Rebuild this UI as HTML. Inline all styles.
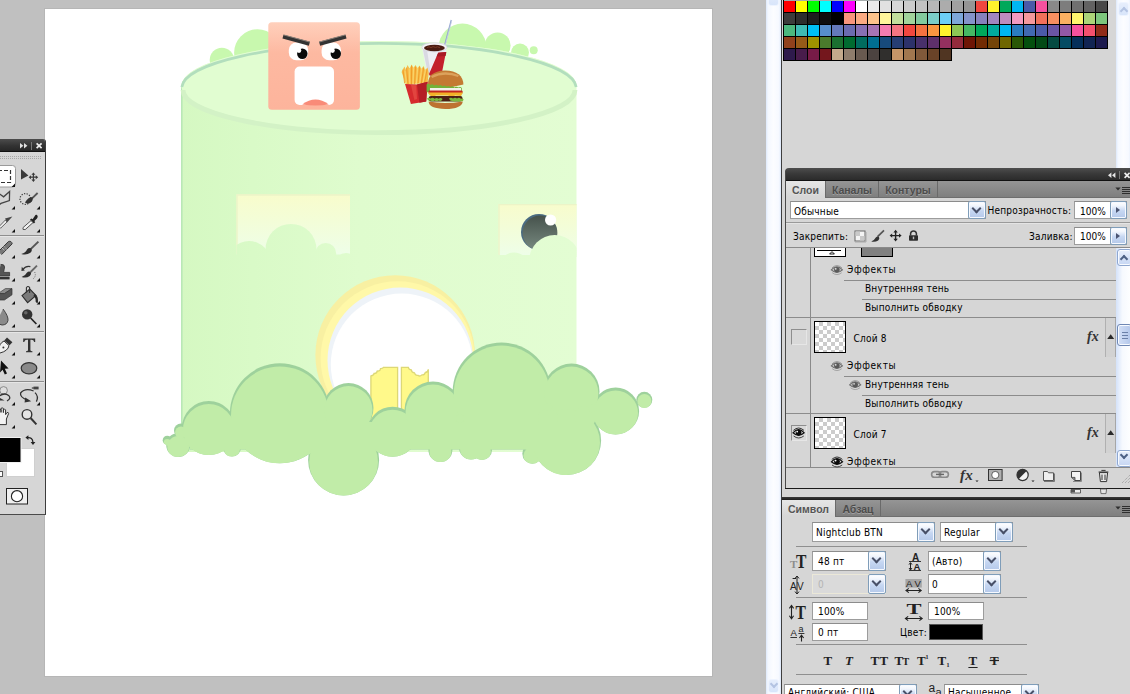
<!DOCTYPE html>
<html lang="ru">
<head>
<meta charset="utf-8">
<title>Photoshop</title>
<style>
*{box-sizing:border-box;margin:0;padding:0}
html,body{width:1130px;height:694px;overflow:hidden;background:#c0c0c0}
body{position:relative;font-family:"DejaVu Sans Condensed","Liberation Sans",sans-serif;font-size:10px;color:#000;line-height:12px;letter-spacing:.2px}
.abs{position:absolute}
.t{position:absolute;white-space:nowrap;line-height:12px;height:12px}
.hl{position:absolute;height:1px;background:#8c8c8c}
.vl{position:absolute;width:1px;background:#8c8c8c}
#canvas{position:absolute;left:45px;top:9px;width:667px;height:667px;background:#fff;box-shadow:0 0 0 1px #b6b6b6}
#art{position:absolute;left:0;top:0}
/* panels */
.pbg{position:absolute;background:#d6d6d6}
.titlebar{position:absolute;background:linear-gradient(#4e4e4e,#3a3a3a 45%,#2b2b2b);}
.tabrow{position:absolute;background:linear-gradient(#959595,#7f7f7f)}
.tab{position:absolute;top:0;height:100%;font-family:"Liberation Sans",sans-serif;font-weight:bold;font-size:10.500px;line-height:19px;color:#4c4c4c;letter-spacing:0;text-align:center;border-right:1px solid #6a6a6a;text-shadow:0 1px 0 rgba(255,255,255,.25)}
.tab.on{background:linear-gradient(#e6e6e6,#d6d6d6);border-right:1px solid #6a6a6a;color:#555}
.field{position:absolute;background:#fff;border:1px solid #9c9c9c;border-top-color:#8c8c8c}
.field .t{left:3px;top:3px}
.dd{position:absolute;right:-1px;top:-1px;bottom:-1px;width:18px;border:1px solid #7f9db9;border-radius:2px;background:linear-gradient(#fff 0,#f2f6fd 22%,#c6d7f2 55%,#b5c9ea);box-shadow:inset 0 0 0 1px #f6f9ff}
.dd:after{content:"";position:absolute;left:4px;top:3px;width:5px;height:5px;border-right:2.400px solid #485068;border-bottom:2.400px solid #485068;transform:rotate(45deg)}
.dd.r:after{left:5px;top:5px;width:0;height:0;border:3px solid transparent;border-left:4px solid #4a5472;border-right:0;transform:none}
.sbd{position:absolute;background:linear-gradient(90deg,#dce8fb 0,#f4f8ff 2px,#fcfdff 50%,#f6f9ff calc(100% - 2px),#dce8fb 100%)}
.sbtn.dis{border-color:#eef4ff;background:linear-gradient(#e6eefc,#d8e5fa);box-shadow:none}
.sb{position:absolute;background:linear-gradient(90deg,#d4e2fa,#f6f9fe 45%,#fdfeff)}
.sbtn{position:absolute;border:1px solid #8fa7cf;border-radius:3px;background:linear-gradient(#e8effc,#c6d6f3);box-shadow:inset 0 0 0 1px #f8fbff}
.chev{position:absolute;width:6px;height:6px;border-left:2px solid #4d6185;border-top:2px solid #4d6185}
.sw{position:absolute;width:11px;height:11px;display:block}
.eyebox{width:16px;height:16px;background:#d9d9d9;border:1px solid #8e8e8e;border-right-color:#e6e6e6;border-bottom-color:#e6e6e6}
.thumb{width:32px;height:32px;border:1px solid #000;background-color:#fff;background-image:linear-gradient(45deg,#ccc 25%,transparent 25%,transparent 75%,#ccc 75%),linear-gradient(45deg,#ccc 25%,transparent 25%,transparent 75%,#ccc 75%);background-size:8px 8px;background-position:0 0,4px 4px}
.lcol{width:11px;height:39px;background:#d2d2d2;border-left:1px solid #b0b0b0;border-right:1px solid #a6a6a6}
</style>
</head>
<body>
<div id="canvas"></div>
<svg id="art" width="1130" height="694" viewBox="0 0 1130 694">
<defs>
<clipPath id="cv"><rect x="45" y="9" width="667" height="667"/></clipPath>
<linearGradient id="gBody" gradientUnits="userSpaceOnUse" x1="181" y1="0" x2="577" y2="0">
<stop offset="0" stop-color="#d5f8c2"/><stop offset=".18" stop-color="#d9fac7"/><stop offset=".45" stop-color="#dffcce"/><stop offset="1" stop-color="#e3fdd3"/>
</linearGradient>
<linearGradient id="gWin" x1="0" y1="0" x2="0" y2="1">
<stop offset="0" stop-color="#f8fccc"/><stop offset=".45" stop-color="#f3fdd8"/><stop offset="1" stop-color="#eefee8"/>
</linearGradient>
<linearGradient id="gBall" x1="0" y1="0" x2="0" y2="1">
<stop offset="0" stop-color="#46524c"/><stop offset="1" stop-color="#788a80"/>
</linearGradient>
<linearGradient id="gFace" x1="0" y1="0" x2="0" y2="1">
<stop offset="0" stop-color="#ffd0bc"/><stop offset=".35" stop-color="#fdb9a1"/><stop offset="1" stop-color="#fdb49c"/>
</linearGradient>
<clipPath id="cw1"><rect x="236.5" y="194.5" width="113.5" height="62"/></clipPath>
<clipPath id="cw2"><rect x="498.5" y="204" width="78" height="53"/></clipPath>
<g id="bush">
<circle cx="167.2" cy="440.3" r="4.5"/><circle cx="178.2" cy="445" r="12"/><circle cx="181" cy="430.500" r="7"/><circle cx="208.8" cy="428" r="27"/><circle cx="232" cy="447.6" r="9"/>
<circle cx="279.9" cy="413.3" r="50"/><circle cx="348.5" cy="408" r="25"/><circle cx="343.6" cy="459.9" r="35.5"/><circle cx="392.6" cy="431.7" r="25"/>
<circle cx="433" cy="410" r="28.5"/><circle cx="440.4" cy="450" r="12"/><circle cx="501.7" cy="391.5" r="49"/><circle cx="482" cy="450" r="10"/>
<circle cx="471" cy="447.6" r="12"/><circle cx="532.3" cy="453.7" r="10"/><circle cx="571.5" cy="391.5" r="28"/><circle cx="566.6" cy="440.5" r="34.5"/>
<circle cx="615.6" cy="411" r="23.5"/><circle cx="585" cy="415" r="12"/><circle cx="548" cy="416" r="11"/><circle cx="460" cy="426" r="9"/><rect x="190" y="420" width="400" height="29.5"/>
</g>
<g id="bush2">
<circle cx="167.2" cy="440.3" r="3.4"/><circle cx="178.2" cy="445" r="10.9"/><circle cx="181" cy="430.500" r="5.9"/><circle cx="208.8" cy="428" r="25.9"/><circle cx="232" cy="447.6" r="7.9"/>
<circle cx="279.9" cy="413.3" r="48.9"/><circle cx="348.5" cy="408" r="23.9"/><circle cx="343.6" cy="459.9" r="34.4"/><circle cx="392.6" cy="431.7" r="23.9"/>
<circle cx="433" cy="410" r="27.4"/><circle cx="440.4" cy="450" r="10.9"/><circle cx="501.7" cy="391.5" r="47.9"/><circle cx="482" cy="450" r="8.9"/>
<circle cx="471" cy="447.6" r="10.9"/><circle cx="532.3" cy="453.7" r="8.9"/><circle cx="571.5" cy="391.5" r="26.9"/><circle cx="566.6" cy="440.5" r="33.4"/>
<circle cx="615.6" cy="411" r="22.4"/><circle cx="585" cy="415" r="10.9"/><circle cx="548" cy="416" r="9.9"/><circle cx="460" cy="426" r="7.9"/><rect x="190" y="420" width="400" height="27.500"/>
<circle cx="460" cy="416.500" r="4"/><circle cx="548.200" cy="405" r="4"/><circle cx="592.800" cy="406.300" r="4"/>
</g>
<clipPath id="cbush">
<circle cx="167.2" cy="440.3" r="4.5"/><circle cx="178.2" cy="445" r="12"/><circle cx="181" cy="430.500" r="7"/><circle cx="208.8" cy="428" r="27"/><circle cx="232" cy="447.6" r="9"/>
<circle cx="279.9" cy="413.3" r="50"/><circle cx="348.5" cy="408" r="25"/><circle cx="343.6" cy="459.9" r="35.5"/><circle cx="392.6" cy="431.7" r="25"/>
<circle cx="433" cy="410" r="28.5"/><circle cx="440.4" cy="450" r="12"/><circle cx="501.7" cy="391.5" r="49"/><circle cx="482" cy="450" r="10"/>
<circle cx="471" cy="447.6" r="12"/><circle cx="532.3" cy="453.7" r="10"/><circle cx="571.5" cy="391.5" r="28"/><circle cx="566.6" cy="440.5" r="34.5"/>
<circle cx="615.6" cy="411" r="23.5"/><circle cx="585" cy="415" r="12"/><circle cx="548" cy="416" r="11"/><circle cx="460" cy="426" r="9"/><rect x="190" y="420" width="400" height="29.5"/>
</clipPath>
</defs>
<g clip-path="url(#cv)">
<!-- back bushes -->
<g fill="#c8f8ae">
<circle cx="221.9" cy="60" r="12.2"/><circle cx="257.5" cy="52.7" r="23.4"/>
<circle cx="462.5" cy="47.6" r="24"/><circle cx="497.6" cy="45.5" r="13"/><circle cx="520" cy="52.5" r="9"/><circle cx="533.7" cy="50.3" r="4"/>
</g>
<!-- cylinder body -->
<path d="M181.5 86 A197.5 45 0 0 1 576.5 86 L576.5 452 L181.5 452 Z" fill="url(#gBody)"/>
<rect x="181" y="86" width="1.6" height="366" fill="#b9e8b6"/>
<!-- top ellipse -->
<ellipse cx="379" cy="86" rx="197.5" ry="45" fill="#e1fdd1"/>
<path d="M183 90 A195 42.400 0 0 0 575 90" fill="none" stroke="#d3f2c6" stroke-width="4.800"/>
<path d="M181.8 87 A197.3 45 0 0 1 576.2 87" fill="none" stroke="#b2debd" stroke-width="2.700"/>
<!-- window 1 -->
<rect x="236.5" y="194.5" width="113.5" height="60" fill="url(#gWin)"/>
<path d="M237 254 V195 H350" fill="none" stroke="#ecf4c8" stroke-width="1.4"/>
<g clip-path="url(#cw1)" fill="url(#gBody)">
<circle cx="249" cy="263" r="22"/><circle cx="291" cy="249.4" r="25.5"/><circle cx="325.7" cy="253.5" r="10.5"/><circle cx="346" cy="264" r="11"/>
</g>
<!-- window 2 -->
<rect x="498.5" y="204" width="78" height="51" fill="url(#gWin)"/>
<path d="M499 255 V204.6 H576.5" fill="none" stroke="#ecf4c8" stroke-width="1.4"/>
<circle cx="539" cy="232" r="18" fill="#4a6b82"/>
<circle cx="540" cy="233" r="17.4" fill="url(#gBall)"/>
<circle cx="550.6" cy="220" r="5.6" fill="#fff"/>
<g clip-path="url(#cw2)" fill="url(#gBody)">
<circle cx="554.700" cy="260.500" r="25.500"/><circle cx="514" cy="267.600" r="15.200"/>
</g>
<!-- arch -->
<circle cx="395.2" cy="355.1" r="79.8" fill="#f8f0a2"/>
<circle cx="397.6" cy="358.3" r="77" fill="#fff8a8"/>
<circle cx="400.3" cy="360.3" r="72.8" fill="#eef3f8"/>
<circle cx="401.7" cy="364.5" r="70.9" fill="#fff"/>
<!-- door leaves -->
<g fill="#fff98a" stroke="#ddd876" stroke-width="1.300">
<path d="M370.9 420 V376 q3 -.5 3.2 -2.6 q2.6 .2 3.2 -2.4 q3 .3 3.2 -2.3 q2.5 0 3 -1.4 H397.6 V420 Z"/>
<path d="M401.4 420 V367.3 H408.3 q.6 2.5 3 2.6 q.3 2.8 3.2 3 q.8 2.8 3.4 2.4 q2 1.6 4 -.4 q2.6 .4 3.4 -2.4 q2.6 -.3 3 -3.2 V420 Z"/>
</g>
<!-- front bushes -->
<use href="#bush" fill="#9ed19c"/>
<circle cx="644.3" cy="399.8" r="8" fill="#9ed19c"/>
<g clip-path="url(#cbush)"><use href="#bush2" fill="#c1eca8" transform="translate(0,2)"/></g>
<circle cx="644.4" cy="401" r="7" fill="#c1eca8"/>
<!-- face -->
<rect x="268.3" y="22.2" width="91.6" height="87.6" rx="3.5" fill="url(#gFace)"/>
<rect x="288.800" y="42.600" width="19.400" height="17.600" rx="7.500" fill="#fff"/>
<rect x="321.600" y="42.600" width="19.400" height="17.600" rx="7.500" fill="#fff"/>
<circle cx="302.300" cy="53.800" r="5.200" fill="#0a0a0a"/><circle cx="335.800" cy="53.800" r="5.200" fill="#0a0a0a"/>
<circle cx="299" cy="50.600" r="2.300" fill="#fff"/><circle cx="332.500" cy="50.600" r="2.300" fill="#fff"/>
<path d="M283 36.600 L309.400 43.800" stroke="#333" stroke-width="4" fill="none"/>
<path d="M346 36.600 L319.600 43.800" stroke="#333" stroke-width="4" fill="none"/>
<path d="M283.600 34.900 L310 42.100 M345.400 34.900 L319 42.100" stroke="#8a8078" stroke-width="1" fill="none"/>
<rect x="294.6" y="66.6" width="39.4" height="38.4" rx="5" fill="#fff"/>
<path d="M302.2 104.6 Q315.5 94.6 328.8 104.6 Q315.5 106.4 302.2 104.6Z" fill="#f98b78"/>
<!-- fast food -->
<g>
<path d="M451.4 20 L444.8 45" stroke="#93a4cf" stroke-width="1.5"/>
<path d="M451.9 20 L445.3 45" stroke="#e8ecf6" stroke-width=".5"/>
<path d="M422 47.4 L427.4 75 L441 77.6 L446.8 47.4 Z" fill="#eeeef3"/>
<path d="M423 50 L428.2 75 L431 75.6 L427 50Z" fill="#d9d9e2"/>
<path d="M446.8 48 L446 52 L438.2 52.7 L429 74 L429.6 75.6 L441 77.6 Z" fill="#c3202b"/>
<path d="M446.4 52 L438.2 52.7 L436.6 56.4 L445.6 56Z" fill="#a81a24"/>
<ellipse cx="434.4" cy="47.3" rx="12.6" ry="4.5" fill="#f6f6f8" stroke="#d4d4de" stroke-width=".8"/>
<ellipse cx="434.4" cy="48" rx="10.4" ry="3.2" fill="#4a1c12"/>
<path d="M427 47.6 q2 -1.6 4 0 q2 -1.8 4.4 -.2 q2.2 -1.4 4.6 .4" stroke="#7a3a26" stroke-width="1" fill="none"/>
<path d="M401.6 72 L404.4 66.4 L406 70 L407.4 65 L409.6 68.6 L411.6 64.6 L413.4 68 L415.6 65 L417.4 68.4 L419.6 65.4 L421.4 69 L423.6 66 L425 70 L427.6 67.4 L428.8 73 L427.6 82.6 L406 84.4Z" fill="#f6bc48"/>
<g stroke="#ef9a26" stroke-width=".9" fill="none" stroke-linecap="round">
<path d="M404.6 83 L403 70 M408 84 L406.6 68 M411.4 84 L411.6 66 M414.6 84 L415.6 67 M418 83.6 L419.6 67 M421.4 83 L423.6 68 M424.6 82.6 L427 70"/>
</g>
<g stroke="#fbd870" stroke-width=".9" fill="none" stroke-linecap="round">
<path d="M406.4 83 L405 71 M409.8 84 L409.2 69 M413 84 L413.6 68 M416.4 83.6 L417.6 68 M419.8 83 L421.6 69 M423 82.8 L425.4 70"/>
</g>
<path d="M405 84 L410.9 104 L426.2 101.6 L427.6 81.8 L417 84.6 Z" fill="#d62b2e"/>
<path d="M417 84.6 L419.4 102.8 L426.2 101.6 L427.6 81.8 Z" fill="#b41e25"/>
<path d="M411 85 L414.4 100 L417 99 L416.2 85.2Z" fill="#e2453f"/>
<path d="M428 85.6 Q427 71 445 70.4 Q463 71 463.4 84.6 Q445 90 428 85.6Z" fill="#c47a33"/>
<path d="M431.6 77 Q444 70.6 458.4 76" stroke="#dca25c" stroke-width="2.4" fill="none"/>
<path d="M426.6 84.4 q2 -1.4 3.6 .6 q2 -1.6 4 .4 q2 -1.6 4 .4 q2.2 -1.6 4.2 .4 q2 -1.6 4 .4 q2 -1.6 4 .4 q2 -1.6 4 .4 q2 -1.6 4 .2 q2 -1.4 3.4 .4 v3.6 q-1.6 1.8 -3.4 .2 q-2 1.6 -4 0 q-2 1.6 -4 0 q-2 1.6 -4 0 q-2 1.6 -4 0 q-2 1.6 -4.2 0 q-2 1.6 -4 0 q-2 1.6 -4 0 q-2 1.4 -3.6 -.4Z" fill="#74b23a"/>
<rect x="430" y="88" width="31" height="3.8" fill="#f3f0ea"/>
<rect x="428.6" y="90.4" width="34" height="3" rx="1" fill="#c3261f"/>
<path d="M427.6 92.6 H463 L461 96 L455 95.4 L452 97.6 L448 95.6 L436 95.6 L433 97 L430 95.4Z" fill="#f2b228"/>
<rect x="428.6" y="96" width="34" height="5.6" rx="2.4" fill="#4c2014"/>
<path d="M427 98.4 q2 -1.6 3.6 .2 q2 -1.6 4 .2 q2 -1.8 4 0 q2 -1.6 4 .2 q-1 2.6 -4 1.6 q-2 1.4 -4 0 q-2 1.4 -4 0 q-2.6 .6 -3.600 -2.200Z M449 98.400 q2 -1.6 4 .2 q2 -1.6 4 0 q2 -1.6 4 .2 q1.600 -1 2.600 .6 q-.6 2.600 -3 1.600 q-2 1.4 -4 0 q-2 1.4 -4 0 q-2.600 .4 -3.600 -2.600Z" fill="#7cb83e"/>
<path d="M428.600 101.600 Q429 108.800 445.400 109 Q461.800 108.800 462.800 101.400 Q445 104.600 428.600 101.600Z" fill="#bd7231"/>
</g>
</g>
</g>
</svg>
<!-- document scrollbar -->
<div class="sbd" style="left:766px;top:0;width:15px;height:694px"></div>
<div class="sbtn dis" style="left:768px;top:-9px;width:11px;height:15px"></div>
<div class="sbtn dis" style="left:768px;top:679px;width:11px;height:14px"></div>
<div class="chev" style="left:770.5px;top:681px;transform:rotate(225deg);width:6px;height:6px;border-color:#b4c4e2"></div>
<!-- dock background -->
<div class="pbg" style="left:781px;top:0;width:349px;height:694px;border-left:1px solid #3e3e3e"></div>
<!-- swatches scrollbar -->
<div class="sbd" style="left:1116px;top:0;width:15px;height:168px"></div>
<div class="sbtn dis" style="left:1118px;top:2px;width:11px;height:14px"></div>
<div class="chev" style="left:1120.500px;top:7.500px;transform:rotate(45deg);border-color:#b4c4e2"></div>
<!-- swatches -->
<div class="abs" style="left:783px;top:0;width:325px;height:49px;background:#000"></div>
<div class="abs" style="left:783px;top:48px;width:169px;height:13px;background:#000"></div>
<div class="abs" style="left:784px;top:0;width:324px;height:1px;background:#a4acac"></div>
<i class="sw" style="left:784px;top:1px;background:#ff0000"></i>
<i class="sw" style="left:796px;top:1px;background:#ffff00"></i>
<i class="sw" style="left:808px;top:1px;background:#00ff00"></i>
<i class="sw" style="left:820px;top:1px;background:#00ffff"></i>
<i class="sw" style="left:832px;top:1px;background:#0000ff"></i>
<i class="sw" style="left:844px;top:1px;background:#ff00ff"></i>
<i class="sw" style="left:856px;top:1px;background:#ffffff"></i>
<i class="sw" style="left:868px;top:1px;background:#ebebeb"></i>
<i class="sw" style="left:880px;top:1px;background:#e1e1e1"></i>
<i class="sw" style="left:892px;top:1px;background:#d7d7d7"></i>
<i class="sw" style="left:904px;top:1px;background:#cccccc"></i>
<i class="sw" style="left:916px;top:1px;background:#c2c2c2"></i>
<i class="sw" style="left:928px;top:1px;background:#b7b7b7"></i>
<i class="sw" style="left:940px;top:1px;background:#acacac"></i>
<i class="sw" style="left:952px;top:1px;background:#a1a1a1"></i>
<i class="sw" style="left:964px;top:1px;background:#959595"></i>
<i class="sw" style="left:976px;top:1px;background:#f0463f"></i>
<i class="sw" style="left:988px;top:1px;background:#fff22d"></i>
<i class="sw" style="left:1000px;top:1px;background:#00a85a"></i>
<i class="sw" style="left:1012px;top:1px;background:#00b6f1"></i>
<i class="sw" style="left:1024px;top:1px;background:#4a5aa8"></i>
<i class="sw" style="left:1036px;top:1px;background:#f6519e"></i>
<i class="sw" style="left:1048px;top:1px;background:#898989"></i>
<i class="sw" style="left:1060px;top:1px;background:#7d7d7d"></i>
<i class="sw" style="left:1072px;top:1px;background:#707070"></i>
<i class="sw" style="left:1084px;top:1px;background:#626262"></i>
<i class="sw" style="left:1096px;top:1px;background:#484848"></i>
<i class="sw" style="left:784px;top:13px;background:#3c3c3c"></i>
<i class="sw" style="left:796px;top:13px;background:#2d2d2d"></i>
<i class="sw" style="left:808px;top:13px;background:#1e1e1e"></i>
<i class="sw" style="left:820px;top:13px;background:#0e0e0e"></i>
<i class="sw" style="left:832px;top:13px;background:#000000"></i>
<i class="sw" style="left:844px;top:13px;background:#f9957c"></i>
<i class="sw" style="left:856px;top:13px;background:#fbab82"></i>
<i class="sw" style="left:868px;top:13px;background:#fdc48c"></i>
<i class="sw" style="left:880px;top:13px;background:#fff59b"></i>
<i class="sw" style="left:892px;top:13px;background:#c3df9c"></i>
<i class="sw" style="left:904px;top:13px;background:#a2d49c"></i>
<i class="sw" style="left:916px;top:13px;background:#83ca9e"></i>
<i class="sw" style="left:928px;top:13px;background:#7bcdc8"></i>
<i class="sw" style="left:940px;top:13px;background:#6dcff6"></i>
<i class="sw" style="left:952px;top:13px;background:#7da7d9"></i>
<i class="sw" style="left:964px;top:13px;background:#8493ca"></i>
<i class="sw" style="left:976px;top:13px;background:#8781bd"></i>
<i class="sw" style="left:988px;top:13px;background:#a186be"></i>
<i class="sw" style="left:1000px;top:13px;background:#bd8cbf"></i>
<i class="sw" style="left:1012px;top:13px;background:#f49ac1"></i>
<i class="sw" style="left:1024px;top:13px;background:#f5989d"></i>
<i class="sw" style="left:1036px;top:13px;background:#f3705a"></i>
<i class="sw" style="left:1048px;top:13px;background:#f78f60"></i>
<i class="sw" style="left:1060px;top:13px;background:#fbb061"></i>
<i class="sw" style="left:1072px;top:13px;background:#fff56d"></i>
<i class="sw" style="left:1084px;top:13px;background:#acd578"></i>
<i class="sw" style="left:1096px;top:13px;background:#7cc67c"></i>
<i class="sw" style="left:784px;top:25px;background:#4cb87e"></i>
<i class="sw" style="left:796px;top:25px;background:#3fbbb4"></i>
<i class="sw" style="left:808px;top:25px;background:#00bff3"></i>
<i class="sw" style="left:820px;top:25px;background:#578ecb"></i>
<i class="sw" style="left:832px;top:25px;background:#6479bb"></i>
<i class="sw" style="left:844px;top:25px;background:#6b6bb0"></i>
<i class="sw" style="left:856px;top:25px;background:#8870b4"></i>
<i class="sw" style="left:868px;top:25px;background:#a674b4"></i>
<i class="sw" style="left:880px;top:25px;background:#f57cb0"></i>
<i class="sw" style="left:892px;top:25px;background:#f47582"></i>
<i class="sw" style="left:904px;top:25px;background:#f2473f"></i>
<i class="sw" style="left:916px;top:25px;background:#f57140"></i>
<i class="sw" style="left:928px;top:25px;background:#fa9640"></i>
<i class="sw" style="left:940px;top:25px;background:#fff22d"></i>
<i class="sw" style="left:952px;top:25px;background:#8dc655"></i>
<i class="sw" style="left:964px;top:25px;background:#45b863"></i>
<i class="sw" style="left:976px;top:25px;background:#00a85a"></i>
<i class="sw" style="left:988px;top:25px;background:#00ab9c"></i>
<i class="sw" style="left:1000px;top:25px;background:#00b6f1"></i>
<i class="sw" style="left:1012px;top:25px;background:#2a7cc1"></i>
<i class="sw" style="left:1024px;top:25px;background:#4169b2"></i>
<i class="sw" style="left:1036px;top:25px;background:#4a5aa8"></i>
<i class="sw" style="left:1048px;top:25px;background:#6a55a5"></i>
<i class="sw" style="left:1060px;top:25px;background:#9258a6"></i>
<i class="sw" style="left:1072px;top:25px;background:#f6519e"></i>
<i class="sw" style="left:1084px;top:25px;background:#f4506e"></i>
<i class="sw" style="left:1096px;top:25px;background:#902c1a"></i>
<i class="sw" style="left:784px;top:37px;background:#90411c"></i>
<i class="sw" style="left:796px;top:37px;background:#965a18"></i>
<i class="sw" style="left:808px;top:37px;background:#9e9200"></i>
<i class="sw" style="left:820px;top:37px;background:#4a7a2c"></i>
<i class="sw" style="left:832px;top:37px;background:#1b7030"></i>
<i class="sw" style="left:844px;top:37px;background:#006b30"></i>
<i class="sw" style="left:856px;top:37px;background:#006c5f"></i>
<i class="sw" style="left:868px;top:37px;background:#006e91"></i>
<i class="sw" style="left:880px;top:37px;background:#174a7c"></i>
<i class="sw" style="left:892px;top:37px;background:#263d73"></i>
<i class="sw" style="left:904px;top:37px;background:#2c316a"></i>
<i class="sw" style="left:916px;top:37px;background:#48306b"></i>
<i class="sw" style="left:928px;top:37px;background:#5e306b"></i>
<i class="sw" style="left:940px;top:37px;background:#94305f"></i>
<i class="sw" style="left:952px;top:37px;background:#932a3c"></i>
<i class="sw" style="left:964px;top:37px;background:#6e1505"></i>
<i class="sw" style="left:976px;top:37px;background:#722b03"></i>
<i class="sw" style="left:988px;top:37px;background:#744408"></i>
<i class="sw" style="left:1000px;top:37px;background:#6f6600"></i>
<i class="sw" style="left:1012px;top:37px;background:#2a5705"></i>
<i class="sw" style="left:1024px;top:37px;background:#044f0e"></i>
<i class="sw" style="left:1036px;top:37px;background:#034a16"></i>
<i class="sw" style="left:1048px;top:37px;background:#054b42"></i>
<i class="sw" style="left:1060px;top:37px;background:#044c63"></i>
<i class="sw" style="left:1072px;top:37px;background:#052f59"></i>
<i class="sw" style="left:1084px;top:37px;background:#112452"></i>
<i class="sw" style="left:1096px;top:37px;background:#1c1a4e"></i>
<i class="sw" style="left:784px;top:49px;background:#2e1a4c"></i>
<i class="sw" style="left:796px;top:49px;background:#481c4b"></i>
<i class="sw" style="left:808px;top:49px;background:#771b47"></i>
<i class="sw" style="left:820px;top:49px;background:#74171d"></i>
<i class="sw" style="left:832px;top:49px;background:#c4aa8c"></i>
<i class="sw" style="left:844px;top:49px;background:#8f7d6c"></i>
<i class="sw" style="left:856px;top:49px;background:#695a50"></i>
<i class="sw" style="left:868px;top:49px;background:#4c4340"></i>
<i class="sw" style="left:880px;top:49px;background:#302f2d"></i>
<i class="sw" style="left:892px;top:49px;background:#c59568"></i>
<i class="sw" style="left:904px;top:49px;background:#a1774f"></i>
<i class="sw" style="left:916px;top:49px;background:#80593a"></i>
<i class="sw" style="left:928px;top:49px;background:#694328"></i>
<i class="sw" style="left:940px;top:49px;background:#503522"></i>
<!-- layers panel -->
<div class="titlebar" style="left:785px;top:168px;width:345px;height:13px;border-top-left-radius:4px;border-bottom:1px solid #111"></div>
<div class="vl" style="left:785px;top:172px;height:317px;background:#4a4a4a"></div>
<div class="tabrow" style="left:786px;top:181px;width:344px;height:17px;border-bottom:1px solid #6e6e6e">
 <div class="tab on" style="left:0;width:40px">Слои</div>
 <div class="tab" style="left:40px;width:53px">Каналы</div>
 <div class="tab" style="left:93px;width:59px">Контуры</div>
</div>
<div class="abs" style="left:786px;top:197px;width:39px;height:2px;background:#d6d6d6"></div>
<!-- blend row -->
<div class="field" style="left:790px;top:201px;width:196px;height:18px"><span class="t" style="top:4px">Обычные</span><span class="dd"></span></div>
<span class="t" style="left:987.5px;top:205px">Непрозрачность:</span>
<div class="field" style="left:1074px;top:201px;width:53px;height:18px"><span class="t" style="left:5px;top:4px;letter-spacing:0">100%</span><span class="dd r" style="width:17px"></span></div>
<div class="hl" style="left:786px;top:222px;width:344px;background:#9a9a9a"></div>
<div class="hl" style="left:786px;top:223px;width:344px;background:#e4e4e4"></div>
<!-- lock row -->
<span class="t" style="left:793px;top:231px">Закрепить:</span>
<span class="t" style="left:1029px;top:231px">Заливка:</span>
<div class="field" style="left:1074px;top:227px;width:53px;height:18px"><span class="t" style="left:5px;top:3px;letter-spacing:0">100%</span><span class="dd r" style="width:17px"></span></div>
<div class="hl" style="left:786px;top:247px;width:344px;background:#8a8a8a"></div>
<!-- list -->
<div class="vl" style="left:810px;top:248px;height:219px;background:#8a8a8a"></div>
<div class="abs" style="left:814px;top:244px;width:32px;height:13px;background:#fff;border:1px solid #000;clip-path:inset(4px 0 0 0)"></div>
<div class="abs" style="left:817px;top:250px;width:24px;height:1px;background:#000"></div>
<div class="abs" style="left:861px;top:244px;width:32px;height:13px;background:#808080;border:1px solid #000;clip-path:inset(4px 0 0 0)"></div>
<span class="t" style="left:847px;top:264px;letter-spacing:.6px">Эффекты</span>
<div class="hl" style="left:844px;top:280px;width:272px"></div>
<span class="t" style="left:865px;top:283px">Внутренняя тень</span>
<div class="hl" style="left:862px;top:299px;width:254px"></div>
<span class="t" style="left:865px;top:302px">Выполнить обводку</span>
<div class="hl" style="left:786px;top:317px;width:330px"></div>
<!-- layer 8 -->
<div class="abs eyebox" style="left:791px;top:329px"></div>
<div class="abs thumb" style="left:814px;top:321px"></div>
<span class="t" style="left:853.5px;top:333px">Слой 8</span>
<div class="abs lcol" style="left:1105px;top:318px"></div>
<span class="t" style="left:847px;top:360px;letter-spacing:.6px">Эффекты</span>
<div class="hl" style="left:844px;top:376px;width:272px"></div>
<span class="t" style="left:865px;top:379px">Внутренняя тень</span>
<div class="hl" style="left:862px;top:395px;width:254px"></div>
<span class="t" style="left:865px;top:398px">Выполнить обводку</span>
<div class="hl" style="left:786px;top:413px;width:330px"></div>
<!-- layer 7 -->
<div class="abs eyebox" style="left:791px;top:424.500px"></div>
<div class="abs thumb" style="left:814px;top:417px"></div>
<span class="t" style="left:853.5px;top:429px">Слой 7</span>
<div class="abs lcol" style="left:1105px;top:414px"></div>
<span class="t" style="left:847px;top:456px;height:11px;overflow:hidden;letter-spacing:.6px">Эффекты</span>
<div class="hl" style="left:786px;top:467px;width:344px;background:#8a8a8a"></div>
<div class="pbg" style="left:786px;top:468px;width:344px;height:20px"></div>
<div class="hl" style="left:785px;top:488px;width:345px;background:#1a1a1a"></div>
<!-- list scrollbar -->
<div class="sb" style="left:1116px;top:248px;width:14px;height:219px"></div>
<div class="sbtn" style="left:1117px;top:249px;width:15px;height:17px"></div>
<div class="chev" style="left:1121px;top:256px;transform:rotate(45deg)"></div>
<div class="sbtn" style="left:1117px;top:450px;width:15px;height:17px"></div>
<div class="chev" style="left:1121px;top:452px;transform:rotate(225deg)"></div>
<div class="sbtn" style="left:1117px;top:324px;width:15px;height:22px;border-color:#6f88b4;background:linear-gradient(90deg,#d4e0f6,#b2c6ea)"></div>
<div class="abs" style="left:1122px;top:332px;width:6px;height:7px;background:repeating-linear-gradient(#6a80a8 0 1px,transparent 1px 3px)"></div>
<svg class="abs" style="left:780px;top:160px" width="350" height="340" viewBox="780 160 350 340">
<defs>
<g id="eye">
<path d="M0 4 Q6 -2.600 12 4 Q6 9.400 0 4Z" fill="#c4c4c4" stroke="#6e6e6e" stroke-width="1.100"/>
<path d="M.8 1.800 Q6 -3 11.400 1.800" fill="none" stroke="#8a8a8a" stroke-width=".9"/>
<circle cx="6" cy="3.800" r="3" fill="#5a5a5a"/><circle cx="4.800" cy="2.800" r=".9" fill="#e6e6e6"/>
<path d="M1 7 Q6 11 11.200 7" fill="none" stroke="#9a9a9a" stroke-width=".9"/>
</g>
<g id="eyeD">
<path d="M.4 4 Q6 -2.400 11.600 4 Q6 9 .4 4Z" fill="#e2e2e2" stroke="#111" stroke-width="1.200"/>
<path d="M.8 1.600 Q6 -3.200 11.400 1.600" fill="none" stroke="#333" stroke-width="1"/>
<circle cx="6" cy="3.800" r="2.900" fill="#0a0a0a"/><circle cx="4.600" cy="2.800" r=".9" fill="#fff"/>
<path d="M1 7.200 Q6 11.200 11.200 7.200" fill="none" stroke="#444" stroke-width="1"/>
</g>
</defs>
<!-- title icons -->
<path d="M1111.4 172.6 L1108 175.3 L1111.4 178Z M1115.4 172.6 L1112 175.3 L1115.4 178Z" fill="#e6e6e6"/>
<rect x="1119" y="171" width="1" height="8" fill="#777"/>
<path d="M1124.6 172.8 L1129.6 177.8 M1129.6 172.8 L1124.6 177.8" stroke="#eee" stroke-width="1.7"/>
<!-- panel menu -->
<path d="M1115.4 187.6 H1120.6 L1118 190.4Z" fill="#2e2e2e"/>
<path d="M1122 187.5 H1130 M1122 189.5 H1130 M1122 191.5 H1130 M1122 193.5 H1130" stroke="#2e2e2e" stroke-width="1"/>
<!-- lock icons -->
<rect x="855" y="231" width="10" height="10" fill="#f4f4f4" stroke="#666" stroke-width="1"/>
<path d="M855.5 231.5 h4.5 v4.5 h-4.5z M860 236 h4.5 v4.5 h-4.5z" fill="#c9c9c9"/>
<path d="M855 242 H866 V232" fill="none" stroke="#aaa" stroke-width="1"/>
<path d="M884 230.4 L877.6 236.6" stroke="#555" stroke-width="1.7"/>
<path d="M871.2 241.4 Q874.8 240 875.8 237.6 Q877.4 236 879 237 Q880 239 878.2 240.4 Q875 242.4 871.2 241.4Z" fill="#333"/>
<path d="M895.6 229.8 L897.8 232.6 H896.3 V234.9 H899 V233.4 L901.6 235.6 L899 237.8 V236.3 H896.3 V238.8 H897.8 L895.6 241.4 L893.4 238.8 H894.9 V236.3 H892.2 V237.8 L889.6 235.6 L892.2 233.4 V234.9 H894.9 V232.6 H893.4Z" fill="#222"/>
<path d="M910.6 235.6 V233.4 Q911 231 913.5 231 Q916 231 916.4 233.4 V235.6" fill="none" stroke="#333" stroke-width="1.5"/>
<rect x="909" y="235.2" width="9" height="5.6" rx=".8" fill="#2c2c2c"/><rect x="912.8" y="236.6" width="1.4" height="2.6" fill="#bbb"/>
<!-- thumb triangle -->
<path d="M829.6 254 L832 251.6 L834.4 254Z" fill="none" stroke="#000" stroke-width=".9"/>
<!-- eyes -->
<use href="#eye" transform="translate(831.300,266.200) scale(.93)"/>
<use href="#eye" transform="translate(831.300,362.200) scale(.93)"/>
<use href="#eye" transform="translate(849.600,381.200) scale(.93)"/>
<use href="#eyeD" x="792.600" y="428.800"/>
<use href="#eyeD" x="831" y="457.800"/>
<!-- fx + triangles -->
<g font-family="'Liberation Serif',serif" font-style="italic" font-weight="bold" font-size="14" fill="#333">
<text x="1087" y="340.600">fx</text><text x="1087" y="436.600">fx</text>
<text x="960" y="480" font-size="15">fx</text>
</g>
<path d="M1107.200 339 L1110.700 334.300 L1114.200 339Z M1107.200 435 L1110.700 430.300 L1114.200 435Z" fill="#2a2a2a"/>
<path d="M975.4 480.4 H978.6 L977 482Z M1031.4 480.4 H1034.6 L1033 482Z" fill="#222"/>
<!-- bottom bar icons -->
<g fill="none" stroke="#8a8a8a" stroke-width="1.6">
<rect x="931.6" y="471.6" width="9" height="5.6" rx="2.8"/><rect x="939.4" y="471.6" width="9" height="5.6" rx="2.8"/>
</g>
<path d="M936 474.4 H944" stroke="#666" stroke-width="1.4"/>
<rect x="988.5" y="469.5" width="13.6" height="11" fill="#b0b0b0" stroke="#333" stroke-width="1"/>
<circle cx="995.3" cy="475" r="3.6" fill="#fff" stroke="#444" stroke-width=".8"/>
<circle cx="1022.6" cy="475" r="5.6" fill="#f4f4f4" stroke="#333" stroke-width="1.2"/>
<path d="M1018.6 479 A5.6 5.6 0 0 1 1026.6 471 Z" fill="#333"/>
<path d="M1043.5 480.5 V471.5 H1047.5 L1048.5 472.8 H1053.5 V480.5Z" fill="#eee" stroke="#555" stroke-width="1"/>
<path d="M1044 481.5 H1054.5 V473.5" fill="none" stroke="#777" stroke-width="1"/>
<path d="M1071.5 471.5 H1080.5 V480.5 H1075 L1071.5 477.4Z" fill="#f4f4f4" stroke="#444" stroke-width="1"/>
<path d="M1071.5 477.4 H1075 V480.5" fill="#888" stroke="#444" stroke-width=".8"/>
<path d="M1081.5 472.6 V481.5 H1073" fill="none" stroke="#888" stroke-width="1"/>
<path d="M1099.4 472.6 H1107.6 L1106.6 481.6 H1100.4Z" fill="#e8e8e8" stroke="#333" stroke-width="1"/>
<path d="M1098.6 472 H1108.4 M1101.4 470.4 H1105.6 M1102 474.6 V480 M1105 474.6 V480" stroke="#333" stroke-width="1"/>
<path d="M1122 483 L1130 475 M1125 483 L1130 478 M1128 483 L1130 481" stroke="#9a9a9a" stroke-width="1" stroke-dasharray="1 1"/>
<!-- glitch remnants -->
<path d="M1071 489.5 H1080.5 V493 H1071Z" fill="#eee" stroke="#444" stroke-width=".8"/><path d="M1071 489.5 h4 v3 h-4z" fill="#555"/>
<path d="M1100.4 489 H1106.6 L1106 493.6 H1101Z" fill="#e4e4e4" stroke="#555" stroke-width=".8"/>
</svg>
<!-- character panel -->
<div class="abs" style="left:782px;top:497px;width:348px;height:3px;background:linear-gradient(#3a3a3a,#1e1e1e)"></div>
<div class="tabrow" style="left:782px;top:500px;width:348px;height:17px;border-bottom:1px solid #6e6e6e">
 <div class="tab on" style="left:0;width:54px">Символ</div>
 <div class="tab" style="left:54px;width:45px">Абзац</div>
</div>
<div class="abs" style="left:782px;top:516px;width:53px;height:2px;background:#d6d6d6"></div>
<div class="field" style="left:812px;top:522px;width:123px;height:20px"><span class="t" style="top:4px">Nightclub BTN</span><span class="dd"></span></div>
<div class="field" style="left:940px;top:522px;width:73px;height:20px"><span class="t" style="top:4px">Regular</span><span class="dd"></span></div>
<div class="hl" style="left:796px;top:546px;width:231px;background:#8f8f8f"></div>
<div class="field" style="left:812px;top:551px;width:74px;height:20px"><span class="t" style="left:5px;top:4px">48 пт</span><span class="dd"></span></div>
<div class="field" style="left:928px;top:551px;width:73px;height:20px"><span class="t" style="top:4px">(Авто)</span><span class="dd"></span></div>
<div class="field" style="left:812px;top:574px;width:74px;height:20px;background:#dadada;border-color:#ebe8d8"><span class="t" style="left:5px;top:4px;color:#b4b4b4">0</span><span class="dd"></span></div>
<div class="field" style="left:928px;top:574px;width:73px;height:20px"><span class="t" style="top:4px">0</span><span class="dd"></span></div>
<div class="hl" style="left:796px;top:597px;width:231px;background:#8f8f8f"></div>
<div class="field" style="left:812px;top:602px;width:56px;height:18px"><span class="t" style="left:5px">100%</span></div>
<div class="field" style="left:928px;top:602px;width:56px;height:18px"><span class="t" style="left:5px">100%</span></div>
<div class="field" style="left:812px;top:623px;width:56px;height:18px"><span class="t" style="left:5px">0 пт</span></div>
<span class="t" style="left:900px;top:627px">Цвет:</span>
<div class="abs" style="left:929px;top:624px;width:54px;height:16px;background:#000;border:1px solid #555"></div>
<div class="hl" style="left:796px;top:644px;width:231px;background:#8f8f8f"></div>
<div class="hl" style="left:796px;top:674px;width:231px;background:#8f8f8f"></div>
<div class="field" style="left:784px;top:684px;width:133px;height:19px"><span class="t" style="left:3px;top:2px">Английский: США</span><span class="dd"></span></div>
<div class="field" style="left:944px;top:684px;width:95px;height:19px"><span class="t" style="left:3px;top:2px">Насыщенное</span><span class="dd"></span></div>
<svg class="abs" style="left:780px;top:500px" width="350" height="194" viewBox="780 500 350 194">
<path d="M1115.4 506.6 H1120.6 L1118 509.4Z" fill="#2e2e2e"/>
<path d="M1122 506.5 H1130 M1122 508.5 H1130 M1122 510.5 H1130 M1122 512.5 H1130" stroke="#2e2e2e" stroke-width="1"/>
<g font-family="'Liberation Serif',serif" fill="#222">
<text x="790" y="568.400" font-size="11" font-weight="bold" fill="#8c8c8c">T</text><text font-size="19.500" font-weight="bold" transform="translate(796,568.400) scale(.8,1)">T</text>
<text font-size="19.500" font-weight="bold" transform="translate(795.400,618.600) scale(.8,1)">T</text>
<text font-size="15" font-weight="bold" transform="translate(906.600,614.400) scale(1.5,1)">T</text>
<g font-weight="bold" font-size="13" fill="#222">
<text x="823.6" y="665">T</text><text x="845" y="665" font-style="italic">T</text>
<text x="870.6" y="665">TT</text><text x="894.6" y="665">T</text><text x="902.600" y="665" font-size="10">T</text>
<text x="917" y="665">T</text><text x="925.6" y="659" font-size="6">1</text>
<text x="937.6" y="665">T</text><text x="946.4" y="667" font-size="6">1</text>
<text x="968.6" y="665">T</text><text x="990" y="665">T</text>
</g>
</g>
<path d="M968.400 667.500 H977.600" stroke="#222"/><path d="M989.600 660.500 H999" stroke="#222" stroke-width="1.200"/>
<!-- vertical scale arrow -->
<path d="M791.5 606 V618 M789.4 608.4 L791.5 605.4 L793.6 608.4 M789.4 615.8 L791.5 618.8 L793.6 615.8" fill="none" stroke="#222" stroke-width="1.1"/>
<!-- horiz scale arrow -->
<path d="M906 618.5 H921.6 M908.2 616.4 L905.4 618.5 L908.2 620.6 M919.4 616.4 L922.2 618.5 L919.4 620.6" fill="none" stroke="#222" stroke-width="1.1"/>
<g font-family="'Liberation Sans',sans-serif" fill="#222">
<!-- kerning -->
<text x="790" y="590" font-size="10">A</text><text x="797" y="590" font-size="10">V</text>
<path d="M797 576 V594 M795 578.4 L797 576 L799 578.4 M795 591.6 L797 594 L799 591.6 M792.6 578.5 H796" fill="none" stroke="#222" stroke-width="1"/>
<!-- leading -->
<text x="912" y="560.600" font-size="10" font-weight="bold">A</text><text x="913.400" y="570" font-size="9.500" font-weight="bold">A</text>
<path d="M909 561.5 H921 M909 570.5 H921" stroke="#222" stroke-width=".9"/>
<path d="M910.5 563 V569.6 M909 564.6 L910.5 562.6 L912 564.6 M909 568 L910.5 570 L912 568" fill="none" stroke="#222" stroke-width="1"/>
<!-- tracking -->
<rect x="905.4" y="579" width="16.4" height="8.6" fill="#a6a6a6"/>
<text x="906" y="587.4" font-size="9.5">A</text><text x="914.4" y="587.4" font-size="9.5">V</text>
<path d="M906.6 590.5 H920.6 M908.8 588.4 L906 590.5 L908.8 592.6 M918.4 588.4 L921.2 590.5 L918.4 592.6" fill="none" stroke="#222" stroke-width="1.1"/>
<!-- baseline shift -->
<text x="790.6" y="636" font-size="9.5">A</text><text x="798.6" y="632" font-size="9">a</text>
<path d="M790.4 637.5 H797 M798.4 633.5 H804.4" stroke="#222" stroke-width=".9"/>
<path d="M801.5 641.6 V635.6 M799.4 638 L801.5 635.2 L803.6 638" fill="none" stroke="#222" stroke-width="1.1"/>
<!-- aa -->
<text x="928.600" y="692.400" font-size="12">a</text><text x="935.400" y="696.400" font-size="11">a</text>
</g>
</svg>
<!-- toolbox -->
<div class="abs" style="left:0;top:139px;width:46px;height:376px;background:#d6d6d6;border-right:1px solid #3c3c3c;border-bottom:1px solid #4a4a4a;border-top-right-radius:3px;overflow:hidden">
<div class="abs" style="left:0;top:0;width:46px;height:13px;background:linear-gradient(#4c4c4c,#333 55%,#262626);border-bottom:1px solid #111"></div>
</div>
<svg class="abs" style="left:0;top:0" width="50" height="694" viewBox="0 0 50 694">
<!-- title icons -->
<path d="M20 143 L23.4 145.7 L20 148.4Z M24 143 L27.4 145.7 L24 148.4Z" fill="#e0e0e0"/>
<rect x="31" y="142" width="1" height="8" fill="#777"/>
<path d="M36.6 143.4 L41.6 148.2 M41.6 143.4 L36.6 148.2" stroke="#eee" stroke-width="1.7"/>
<!-- grip -->
<path d="M0 156.5 H41 M0 158.5 H41" stroke="#a8a8a8" stroke-width="1" stroke-dasharray="1 1"/>
<!-- selected tool -->
<rect x="-4" y="165.5" width="19.5" height="21.5" rx="3" fill="#fff" stroke="#9a9a9a"/>
<rect x="-2" y="170.5" width="12.5" height="12" fill="none" stroke="#333" stroke-width="1.2" stroke-dasharray="4 2"/>
<path d="M15 183.6 V187 H11.6Z" fill="#111"/>
<g fill="#3a3a3a" stroke="none">
<!-- move -->
<path d="M21 169 L28.4 175.4 L21 179.4Z"/>
<path d="M33.4 172.4 L35.4 174.8 H34 V176.6 H35.8 V175.2 L38.2 177.2 L35.8 179.2 V177.8 H34 V179.6 H35.4 L33.4 182 L31.4 179.6 H32.8 V177.8 H31 V179.2 L28.6 177.2 L31 175.2 V176.6 H32.8 V174.8 H31.4Z"/>
<!-- corner triangles -->
<path d="M15 206 V209.4 H11.6Z M40 206 V209.4 H36.6Z M15 229 V232.4 H11.6Z M40 229 V232.4 H36.6Z M15 255 V258.4 H11.6Z M40 255 V258.4 H36.6Z M15 278 V281.4 H11.6Z M40 278 V281.4 H36.6Z M15 301 V304.4 H11.6Z M40 301 V304.4 H36.6Z M15 324 V327.4 H11.6Z M40 324 V327.4 H36.6Z M15 352 V355.4 H11.6Z M40 352 V355.4 H36.6Z M15 375 V378.4 H11.6Z M40 375 V378.4 H36.6Z M15 402 V405.4 H11.6Z M40 402 V405.4 H36.6Z M15 425 V428.4 H11.6Z M15 446 V449.4 H11.6Z" fill="#111"/>
</g>
<!-- lasso (poly) -->
<path d="M-1 193.5 L3.6 196.8 L9.6 191.4 L9.4 200.6 L1 203.4 L-1 205" fill="none" stroke="#444" stroke-width="1.3"/>
<!-- quick selection -->
<circle cx="25.4" cy="199" r="5.4" fill="none" stroke="#333" stroke-width="1.2" stroke-dasharray="1.2 1.4"/>
<path d="M37.6 193 L31 199.4" stroke="#555" stroke-width="1.8"/>
<path d="M25 202.6 Q28.4 196.6 32.8 197.4 Q33 202 29 203.4 Q26.6 204 25 202.6Z" fill="#333"/>
<!-- slice knife -->
<path d="M5 218.4 L12.4 216.4 L7 222.6Z" fill="#444"/>
<path d="M5.4 220 L-1 226.6 L0.6 228.2 L7 222Z" fill="#eee" stroke="#555" stroke-width=".9"/>
<!-- eyedropper -->
<path d="M36.6 214.8 Q38.6 216.2 37 218.4 L34.4 221 L35.2 222.2 L33.8 223.6 L30 219.6 L31.4 218.4 L32.6 219.2 L34.8 216 Q35.6 214.4 36.6 214.8Z" fill="#222"/>
<path d="M31 220.6 L33 222.6 L25.2 229.6 L23 229.4 L23 227.6Z" fill="#f2f2f2" stroke="#444" stroke-width=".9"/>
<!-- separators -->
<path d="M0 235.5 H44 M0 331.5 H44 M0 381.5 H44" stroke="#8e8e8e"/>
<path d="M0 236.5 H44 M0 332.5 H44 M0 382.5 H44" stroke="#e6e6e6"/>
<!-- healing -->
<path d="M-2 252 L8.4 241.6 Q11.4 240.4 12.2 243.8 L1.6 254.6" fill="#777" stroke="#3a3a3a" stroke-width="1"/>
<path d="M2 248 L6 252 M4 246.4 L7.6 250" stroke="#ddd" stroke-width="1" stroke-dasharray="1 1"/>
<!-- brush -->
<path d="M38.4 241.6 L30.4 249.4" stroke="#555" stroke-width="2"/>
<path d="M21.2 254 Q25.8 252.4 27 249.4 Q29 247.2 31.4 248.6 Q32.6 251 30.4 252.8 Q26.4 255.6 21.2 254Z" fill="#2e2e2e"/>
<!-- stamp -->
<path d="M0.6 264.4 Q4.4 264 4.6 267 Q4.2 269.6 3.6 272.4 H9.6 V276 H-1 V272.4" fill="#555" stroke="#333" stroke-width=".8"/>
<rect x="-1" y="277" width="10.6" height="2.4" fill="#333"/>
<!-- history brush -->
<path d="M37 265.6 L30.6 272" stroke="#666" stroke-width="1.8"/>
<path d="M21.6 277 Q25.6 275.6 26.8 272.8 Q28.6 270.8 30.8 272 Q31.8 274.4 29.8 276 Q26.2 278.6 21.6 277Z" fill="#2e2e2e"/>
<path d="M23 269.4 Q26 265.4 30.4 266.6" fill="none" stroke="#333" stroke-width="1.1"/><path d="M21.8 266.8 L24.8 270.4 L21.4 271Z" fill="#333"/>
<path d="M34.6 272 Q36.6 276 33 279" fill="none" stroke="#666" stroke-width="1" stroke-dasharray="1 1.3"/>
<!-- eraser -->
<path d="M-2 293.6 L5.4 288.6 H12 L4.4 293.6Z" fill="#8a8a8a" stroke="#444" stroke-width=".7"/>
<path d="M-2 293.6 H4.4 L12 288.6 V294.8 L4.4 300 H-2Z" fill="#555" stroke="#333" stroke-width=".7"/>
<!-- bucket -->
<path d="M22 295.6 L29.8 289 L36 295.4 L27.6 302.6Z" fill="#7b7b7b" stroke="#2e2e2e" stroke-width="1.1"/>
<path d="M26.4 292.4 V287.8 Q27.6 285.4 29.6 287.4 V293" fill="none" stroke="#333" stroke-width="1.1"/>
<path d="M34.6 294 Q38.6 295.6 38 302.6 Q36.4 303.6 35.6 301.6 Q36 297.6 33.4 296Z" fill="#2a2a2a"/>
<!-- blur drop -->
<path d="M3 309 Q8.4 316 8 320.4 Q7 325 2 325 Q-2 325 -3 321" fill="#8a8a8a" stroke="#444" stroke-width="1"/>
<!-- dodge -->
<circle cx="27.2" cy="314.4" r="5.2" fill="#333"/><circle cx="25.8" cy="312.8" r="1.8" fill="#666"/>
<path d="M30.6 318 L36.4 324" stroke="#222" stroke-width="1.7"/>
<!-- pen -->
<path d="M7 337.4 L12.4 342.2 L9.6 345.2 L4.2 340.4Z" fill="#333"/>
<path d="M4 341 L9 345.6 Q8 351 0 353 L-2 351 Q-.6 343 4 341Z" fill="#f0f0f0" stroke="#333" stroke-width="1"/>
<circle cx="3.4" cy="347.4" r="1" fill="#333"/>
<!-- T -->
<path d="M23.2 338.4 H35.2 V342 H34.2 Q33.8 339.8 31.4 339.8 H30.4 V350 Q30.4 351.2 32.4 351.2 V352.2 H26 V351.2 Q28 351.2 28 350 V339.8 H27 Q24.6 339.8 24.2 342 H23.2Z" fill="#333"/>
<!-- path select arrow -->
<path d="M1 360.4 L8.6 368.6 L4.8 368.8 L7 373.6 L4.8 374.6 L2.6 369.8 L0 372.4Z" fill="#111"/>
<!-- ellipse -->
<ellipse cx="29" cy="368.2" rx="7.8" ry="5.6" fill="#8a8a8a" stroke="#333" stroke-width="1.2"/>
<!-- 3d rotate -->
<circle cx="3.6" cy="390.4" r="3.8" fill="#ddd" stroke="#777" stroke-width=".8"/>
<path d="M-2 397 Q4 392 8.6 395.4 Q11.6 398.6 7 401" fill="none" stroke="#333" stroke-width="1.3"/>
<path d="M-2 397 L4.6 400.4 H-2Z" fill="#333"/>
<!-- 3d orbit -->
<path d="M33.6 391 Q25 387.6 20.6 393 Q19.6 397 27.6 400.4" fill="none" stroke="#333" stroke-width="1.3"/>
<path d="M25.2 397.6 L31.2 401.2 L24.6 402.4Z" fill="#333"/>
<path d="M35 392.6 Q39 396.4 36.4 401.6" fill="none" stroke="#333" stroke-width="1.3"/>
<rect x="33.6" y="386.6" width="5" height="2.8" fill="#444"/><path d="M31.4 388 L33.6 386.8 V389.2Z" fill="#444"/>
<!-- hand -->
<path d="M-1 413 V409.6 Q0 408.6 1 409.6 V412.4 V408.4 Q2.2 407.4 3.4 408.4 V412.6 V409.6 Q4.6 408.8 5.6 409.8 V414.6 L7 412.6 Q8.6 412 8.6 413.6 L6.4 419 V424.6 H-2" fill="#f2f2f2" stroke="#333" stroke-width="1"/>
<!-- zoom -->
<circle cx="27" cy="414.4" r="4.8" fill="#e4e4e4" stroke="#333" stroke-width="1.4"/>
<path d="M30.6 418 L36.4 424.4" stroke="#333" stroke-width="2"/>
<!-- colours -->
<rect x="6.5" y="448.5" width="28" height="28" fill="#fff" stroke="#cfcfcf"/>
<rect x="-2" y="437.5" width="23" height="25" fill="#000" stroke="#f0f0f0"/>
<path d="M27.4 437.6 Q32.6 437 33 442.6" fill="none" stroke="#222" stroke-width="1.2"/>
<path d="M25.4 437.6 L28.4 435.2 V440Z M33 445 L30.6 442 H35.4Z" fill="#222"/>
<rect x="-1.5" y="471.5" width="4" height="5" fill="#fff" stroke="#555"/>
<!-- quick mask -->
<rect x="6.5" y="488.5" width="21" height="15.5" fill="#f0f0f0" stroke="#222"/>
<circle cx="17" cy="496.2" r="5.6" fill="#fff" stroke="#222" stroke-width="1.1"/>
</svg>
</body></html>
